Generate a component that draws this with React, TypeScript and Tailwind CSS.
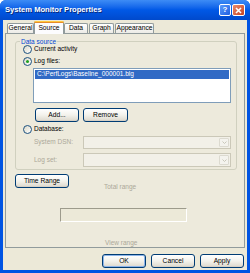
import React from "react";

const FONT = "[font-family:'Liberation_Sans',Arial,sans-serif]";

function XpButton({
  label,
  width,
  isDefault = false,
}: {
  label: string;
  width: string;
  isDefault?: boolean;
}) {
  return (
    <div
      className={`${width} h-[14px] shrink-0 rounded-[3px] border border-[#003c74] bg-gradient-to-b from-[#ffffff] via-[#f3f2ec] to-[#dcd8cc] flex items-center justify-center text-[6.7px] leading-none text-black ${
        isDefault ? "shadow-[inset_0_0_0_1px_#8cb4e8]" : "shadow-[inset_0_-1px_0_#d6d0c5]"
      }`}
    >
      {label}
    </div>
  );
}

function Radio({ checked = false }: { checked?: boolean }) {
  return (
    <div className="w-[9px] h-[9px] shrink-0 rounded-full border border-[#1c5180] bg-gradient-to-br from-[#dcd9c8] to-[#ffffff] flex items-center justify-center">
      {checked && <div className="w-[3px] h-[3px] rounded-full bg-[#21a121]" />}
    </div>
  );
}

function DisabledCombo({ height }: { height: string }) {
  return (
    <div className={`w-[148px] ${height} border border-[#cbc8b8] bg-[#f2f0e8] flex justify-end p-[1px]`}>
      <div className="w-[10px] h-full rounded-[1px] border border-[#dcdad0] bg-[#f4f3ee] flex items-center justify-center">
        <svg width="5" height="3" viewBox="0 0 5 3">
          <path d="M0.5 0.5 L2.5 2.5 L4.5 0.5" fill="none" stroke="#c9c7ba" strokeWidth="1" />
        </svg>
      </div>
    </div>
  );
}

function Tab({ label, width, selected = false, className = "" }: { label: string; width: string; selected?: boolean; className?: string }) {
  if (selected) {
    return (
      <div
        className={`${width} h-[13px] mb-[-1px] relative z-10 rounded-t-[2px] border-x border-[#919b9c] bg-[#fcfcfe] flex flex-col ${className}`}
      >
        <div className="h-[2px] mx-[-1px] rounded-t-[2px] bg-[#e68b2c] border-t border-[#ffc83c]" />
        <div className="flex-1 flex items-center justify-center text-[6.7px] leading-none text-black pb-[1px]">
          {label}
        </div>
      </div>
    );
  }
  return (
    <div
      className={`${width} h-[10px] rounded-t-[2px] border-t border-x border-[#919b9c] bg-gradient-to-b from-[#ffffff] to-[#ecebe6] flex items-center justify-center text-[6.7px] leading-none text-black ${className}`}
    >
      {label}
    </div>
  );
}

export default function App() {
  return (
    <div className={`w-[250px] h-[273px] bg-[#0054e3] rounded-t-[6px] overflow-hidden flex flex-col ${FONT}`}>
      {/* title bar */}
      <div className="h-[20px] shrink-0 bg-gradient-to-b from-[#3d8cf5] via-[#0058e6] to-[#0049cc] flex items-center pl-[5px] pr-[5px]">
        <span className="text-[7.6px] font-bold text-white leading-none [text-shadow:1px_1px_0_#0a2a7a]">
          System Monitor Properties
        </span>
        <div className="ml-auto flex gap-[1px]">
          <div className="w-[12px] h-[12px] rounded-[2px] border border-white bg-gradient-to-br from-[#5b9bfd] to-[#1d5ee0] flex items-center justify-center text-white text-[8px] font-bold leading-none">
            ?
          </div>
          <div className="w-[13px] h-[12px] rounded-[2px] border border-white bg-gradient-to-br from-[#e88a6c] to-[#c8401c] flex items-center justify-center">
            <svg width="7" height="7" viewBox="0 0 7 7">
              <path d="M1 1 L6 6 M6 1 L1 6" stroke="#ffffff" strokeWidth="1.6" />
            </svg>
          </div>
        </div>
      </div>

      {/* window body */}
      <div className="flex-1 mx-[3px] mb-[3px] bg-[#ece9d8] flex flex-col">
        {/* tabs */}
        <div className="h-[13px] pt-[1px] pl-[4px] flex items-end">
          <Tab label="General" width="w-[27px]" />
          <Tab label="Source" width="w-[30px]" selected />
          <Tab label="Data" width="w-[24px]" />
          <Tab label="Graph" width="w-[25px]" className="ml-[1px]" />
          <Tab label="Appearance" width="w-[39px]" className="ml-[1px]" />
        </div>

        {/* tab page */}
        <div className="mx-[2px] h-[215px] border border-[#919b9c] bg-[#edeadc] flex flex-col pl-[9px] text-[6.5px] leading-none whitespace-nowrap">
          {/* Data source group */}
          <div className="relative mt-[7px] w-[222px] h-[129px] rounded-[3px] border border-[#d0d0bf] flex flex-col pl-[7px]">
            <span className="absolute left-[4px] top-[-4px] px-[1px] bg-[#edeadc] text-[#0046d5] leading-[7px]">
              Data source
            </span>
            <div className="mt-[2px] h-[11px] flex items-center gap-[2px] text-black">
              <Radio />
              <span>Current activity</span>
            </div>
            <div className="h-[12px] flex items-center gap-[2px] text-black">
              <Radio checked />
              <span>Log files:</span>
            </div>
            <div className="mt-[1px] ml-[10px] w-[198px] h-[35px] border border-[#7f9db9] bg-white p-[1px]">
              <div className="h-[9px] bg-[#316ac5] text-white flex items-center pl-[2px]">
                C:\PerfLogs\Baseline_000001.blg
              </div>
            </div>
            <div className="mt-[5px] ml-[12px] flex gap-[4px]">
              <XpButton label="Add..." width="w-[44px]" />
              <XpButton label="Remove" width="w-[45px]" />
            </div>
            <div className="mt-[1px] h-[12px] flex items-center gap-[2px] text-black">
              <Radio />
              <span>Database:</span>
            </div>
            <div className="mt-[1px] flex items-center text-[#aca899]">
              <span className="w-[60px] pl-[11px]">System DSN:</span>
              <DisabledCombo height="h-[13px]" />
            </div>
            <div className="mt-[4px] flex items-center text-[#aca899]">
              <span className="w-[60px] pl-[11px]">Log set:</span>
              <DisabledCombo height="h-[14px]" />
            </div>
          </div>

          {/* time range */}
          <div className="mt-[4px]">
            <XpButton label="Time Range" width="w-[54px]" />
          </div>
          <div className="mt-[-5px] h-[8px] ml-[89px] flex items-center text-[#aca899]">Total range</div>
          <div className="mt-[17px] ml-[45px] w-[127px] h-[14px] border-t border-l border-[#9d9b8c] border-b border-r border-b-white border-r-white bg-[#ece9d8]" />
          <div className="mt-[17px] h-[8px] ml-[90px] flex items-center text-[#aca899]">View range</div>
        </div>

        {/* dialog buttons */}
        <div className="mt-[6px] flex justify-end gap-[5px] pr-[3px]">
          <XpButton label="OK" width="w-[44px]" isDefault />
          <XpButton label="Cancel" width="w-[44px]" />
          <XpButton label="Apply" width="w-[44px]" />
        </div>
      </div>
    </div>
  );
}
